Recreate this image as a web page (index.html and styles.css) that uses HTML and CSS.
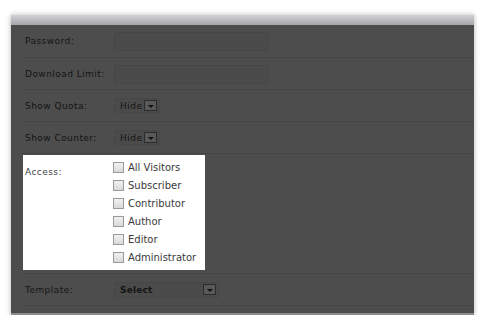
FILE: index.html
```html
<!DOCTYPE html>
<html lang="en">
<head>
  <meta charset="UTF-8" />
  <title>Download settings</title>
  <link rel="stylesheet" href="styles.css">
</head>
<body>
  <div class="window">
    <div class="titlebar"></div>
    <div class="form">
      <div class="row first">
        <label class="label">Password:</label>
        <input class="field" type="text">
      </div>
      <div class="row">
        <label class="label">Download Limit:</label>
        <input class="field" type="text">
      </div>
      <div class="row">
        <label class="label">Show Quota:</label>
        <div class="select small"><span>Hide</span><i class="arrow"></i></div>
      </div>
      <div class="row">
        <label class="label">Show Counter:</label>
        <div class="select small"><span>Hide</span><i class="arrow"></i></div>
      </div>
      <div class="row access-row">
        <div class="access">
          <label class="label access-label">Access:</label>
          <ul class="roles">
            <li><input type="checkbox"> All Visitors</li>
            <li><input type="checkbox"> Subscriber</li>
            <li><input type="checkbox"> Contributor</li>
            <li><input type="checkbox"> Author</li>
            <li><input type="checkbox"> Editor</li>
            <li><input type="checkbox"> Administrator</li>
          </ul>
        </div>
      </div>
      <div class="row">
        <label class="label">Template:</label>
        <div class="select wide"><span class="bold">Select</span><i class="arrow"></i></div>
      </div>
    </div>
  </div>
</body>
</html>
```

FILE: styles.css
```css
body {
  margin: 0;
  background: #fff;
  font-family: "DejaVu Sans", Verdana, sans-serif;
}
.window {
  margin: 14px 0 0 11px;
  width: 463px;
  height: 299px;
  background: #4d4d4d;
  border-bottom: 2px solid #8c8c8c;
  box-shadow: 0 1px 5px rgba(0, 0, 0, 0.3);
  display: flex;
  flex-direction: column;
}
.titlebar {
  height: 11px;
  background: linear-gradient(#d2d2d6, #a6a6aa);
  border-top: 1px solid #e2e2e4;
  box-sizing: border-box;
}
.form {
  padding-left: 11px;
}
.row {
  display: flex;
  align-items: center;
  height: 31px;
  border-bottom: 1px solid #464646;
}
.row.first {
  height: 32px;
}
.label {
  flex: none;
  width: 92px;
  padding-left: 3px;
  box-sizing: border-box;
  font-size: 9px;
  letter-spacing: 0.45px;
  color: #141414;
}
.field {
  width: 155px;
  height: 19px;
  margin: 0;
  margin-top: 1px;
  padding: 0;
  box-sizing: border-box;
  background: #4b4b4b;
  border: 1px solid #464646;
  border-radius: 3px;
}
.select {
  display: flex;
  align-items: center;
  justify-content: space-between;
  height: 15px;
  box-sizing: border-box;
  padding: 0 2px 0 5px;
  border: 1px solid #474747;
  border-radius: 3px;
  background: #4b4b4b;
  font-size: 9px;
  letter-spacing: 0.5px;
  color: #141414;
}
.select.small {
  width: 46px;
}
.select.wide {
  width: 105px;
  height: 16px;
}
.bold {
  font-weight: bold;
  letter-spacing: 0.2px;
}
.arrow {
  width: 13px;
  height: 11px;
  box-sizing: border-box;
  border: 1px solid #2b2b2b;
  background: #595959;
  position: relative;
}
.arrow::after {
  content: "";
  position: absolute;
  left: 3px;
  top: 4px;
  border-left: 3px solid transparent;
  border-right: 3px solid transparent;
  border-top: 3px solid #111;
}
.access-row {
  height: auto;
  padding: 1px 0 3px;
}
.access {
  display: flex;
  align-items: flex-start;
  width: 182px;
  height: 115px;
  margin-left: 1px;
  background: #fff;
}
.access-label {
  color: #444;
  margin-top: 8px;
  width: 90px;
  padding-left: 2px;
  line-height: 18px;
}
.roles {
  list-style: none;
  margin: 3px 0 0;
  padding: 0;
  font-size: 10px;
  color: #3a3a3a;
}
.roles li {
  display: flex;
  align-items: center;
  height: 18px;
  gap: 4px;
}
.roles input {
  appearance: none;
  -webkit-appearance: none;
  margin: 0;
  width: 11px;
  height: 11px;
  border: 1px solid #9a9a9a;
  background: linear-gradient(#f2f2f2, #d8d8d8);
}
```
